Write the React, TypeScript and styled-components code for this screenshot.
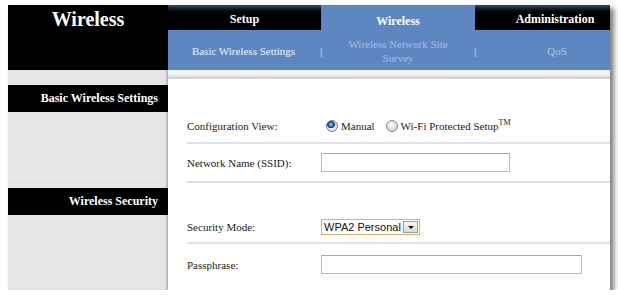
import React from "react";
import styled, { createGlobalStyle } from "styled-components";

const Global = createGlobalStyle`
  html, body { margin: 0; padding: 0; background: #fff; }
  body { font-family: "Liberation Serif", "Times New Roman", serif; }
`;

const Page = styled.div`
  padding: 5px 0 0 8px;
`;

const Frame = styled.div`
  width: 602px;
  display: grid;
  grid-template-columns: 160px 442px;
  box-shadow: 4px 3px 5px rgba(0, 0, 0, 0.5);
`;

const Brand = styled.div`
  background: #000;
  height: 65px;
  box-sizing: border-box;
  padding-top: 3px;
  text-align: center;
  color: #fff;
  font-size: 20px;
  font-weight: bold;
  line-height: 22px;
`;

const Nav = styled.div`
  display: flex;
  flex-direction: column;
`;

const TabRow = styled.div`
  display: grid;
  grid-template-columns: 153px 154px 1fr;
  height: 25px;
  background: linear-gradient(#3b4b63 0, #0b0f18 5px, #000 8px);
`;

const Tab = styled.div<{ $active?: boolean; $shift?: number }>`
  background: ${(p) => (p.$active ? "#5e87c2" : "transparent")};
  color: #fff;
  font-weight: bold;
  font-size: 12px;
  line-height: 14px;
  text-align: center;
  box-sizing: border-box;
  padding-top: ${(p) => (p.$active ? 9 : 7)}px;
  padding-left: ${(p) => p.$shift ?? 0}px;
`;

const SubNav = styled.div`
  height: 40px;
  box-sizing: border-box;
  padding-top: 2px;
  background: #5e87c2;
  display: flex;
  align-items: center;
  font-size: 11px;
  line-height: 14px;
`;

const SubItem = styled.div<{ $w?: number; $muted?: boolean; $shift?: number }>`
  ${(p) => (p.$w ? `width: ${p.$w}px;` : "flex: 1;")}
  text-align: center;
  box-sizing: border-box;
  padding: 0 ${(p) => (p.$muted ? 24 : 0)}px 0 ${(p) => p.$shift ?? (p.$muted ? 24 : 0)}px;
  color: ${(p) => (p.$muted ? "#a9badf" : "#eef2fa")};
`;

const SubLink = styled.span<{ $pale?: boolean }>`
  color: ${(p) => (p.$pale ? "#b3c2e6" : "inherit")};
`;

const Sep = styled.div`
  width: 4px;
  text-align: center;
  color: #dbe3f3;
`;

const SideStrip = styled.div`
  height: 10px;
  background: #e6e6e6;
  box-shadow: inset -3px 0 3px -2px rgba(0, 0, 0, 0.35);
`;

const MainStrip = styled.div`
  height: 10px;
  background: linear-gradient(
    #f4f4f4 0,
    #ececec 6px,
    #d3d3d3 7px,
    #d3d3d3 9px,
    #ffffff 9px
  );
`;

const Side = styled.div`
  background: #e6e6e6;
  padding-top: 5px;
  box-shadow: inset -3px 0 3px -2px rgba(0, 0, 0, 0.35);
`;

const SectionTitle = styled.div`
  background: #000;
  height: 27px;
  line-height: 27px;
  color: #fff;
  font-size: 12px;
  font-weight: bold;
  text-align: right;
  padding-right: 10px;
`;

const Main = styled.div<{ $top: number }>`
  background: #fff;
  padding: ${(p) => p.$top}px 0 0 19px;
`;

const Row = styled.div<{ $h: number; $last?: boolean; $bottom?: number }>`
  display: flex;
  align-items: center;
  height: ${(p) => p.$h}px;
  box-sizing: border-box;
  padding-bottom: ${(p) => p.$bottom ?? 0}px;
  border-bottom: ${(p) => (p.$last ? "none" : "2px solid #dedef0")};
`;

const Label = styled.div`
  width: 134px;
  font-size: 11px;
  color: #222;
`;

const Value = styled.div`
  display: flex;
  align-items: center;
  font-size: 11px;
  color: #222;
`;

const Radio = styled.input.attrs({ type: "radio" })`
  appearance: none;
  -webkit-appearance: none;
  width: 12px;
  height: 12px;
  margin: 0 3px 0 5px;
  border-radius: 50%;
  border: 1px solid #8f8f8f;
  box-sizing: border-box;
  background: radial-gradient(circle at 45% 40%, #ffffff 0, #e9e9e9 3px, #cfcfcf 6px);
  &:checked {
    border-color: #6f7f95;
    background: radial-gradient(circle at 40% 35%, #b9e2ff 0, #3f86d6 1.5px, #174a94 3px, #0e2f66 3.6px, transparent 4px),
      radial-gradient(circle, #f4f4f4 0, #dcdcdc 6px);
  }
`;

const RadioText = styled.span<{ $gap?: number }>`
  margin-right: ${(p) => p.$gap ?? 0}px;
`;

const Tm = styled.sup`
  font-size: 8px;
  vertical-align: 5px;
  line-height: 0;
`;

const TextBox = styled.input<{ $w: number }>`
  width: ${(p) => p.$w}px;
  height: 19px;
  box-sizing: border-box;
  margin: 0;
  border: 1px solid #bcbcbc;
  border-top-color: #a9a9a9;
  background: #fff;
  outline: none;
`;

const Select = styled.div`
  width: 99px;
  height: 16px;
  box-sizing: border-box;
  border: 1px solid #d7b36a;
  background: #fff;
  display: flex;
  align-items: center;
  justify-content: space-between;
  padding: 0 1px 0 2px;
  font-family: "Liberation Sans", Arial, sans-serif;
  font-size: 11px;
  color: #111;
`;

const SelectButton = styled.div`
  width: 15px;
  height: 12px;
  box-sizing: border-box;
  border: 1px solid #9b9b9b;
  background: linear-gradient(#f6f6f6, #d9d9d9);
  display: flex;
  align-items: center;
  justify-content: center;
`;

const Arrow = styled.div`
  width: 0;
  height: 0;
  border-left: 3px solid transparent;
  border-right: 3px solid transparent;
  border-top: 3px solid #111;
  margin-top: 1px;
`;

export default function App() {
  return (
    <>
      <Global />
      <Page>
        <Frame>
          <Brand>Wireless</Brand>
          <Nav>
            <TabRow>
              <Tab>Setup</Tab>
              <Tab $active>Wireless</Tab>
              <Tab $shift={25}>Administration</Tab>
            </TabRow>
            <SubNav>
              <SubItem $w={151}>Basic Wireless Settings</SubItem>
              <Sep>|</Sep>
              <SubItem $w={150} $muted>
                Wireless Network Site Survey
              </SubItem>
              <Sep>|</Sep>
              <SubItem $shift={27}>
                <SubLink $pale>QoS</SubLink>
              </SubItem>
            </SubNav>
          </Nav>

          <SideStrip />
          <MainStrip />

          <Side>
            <SectionTitle>Basic Wireless Settings</SectionTitle>
          </Side>
          <Main $top={30}>
            <Row $h={34}>
              <Label>Configuration View:</Label>
              <Value>
                <Radio name="cfg" defaultChecked />
                <RadioText $gap={6}>Manual</RadioText>
                <Radio name="cfg" />
                <RadioText>
                  Wi-Fi Protected Setup<Tm>TM</Tm>
                </RadioText>
              </Value>
            </Row>
            <Row $h={39}>
              <Label>Network Name (SSID):</Label>
              <Value>
                <TextBox $w={189} defaultValue="" />
              </Value>
            </Row>
          </Main>

          <Side>
            <SectionTitle>Wireless Security</SectionTitle>
          </Side>
          <Main $top={28}>
            <Row $h={33}>
              <Label>Security Mode:</Label>
              <Value>
                <Select>
                  <span>WPA2 Personal</span>
                  <SelectButton>
                    <Arrow />
                  </SelectButton>
                </Select>
              </Value>
            </Row>
            <Row $h={46} $bottom={5} $last>
              <Label>Passphrase:</Label>
              <Value>
                <TextBox $w={261} defaultValue="" />
              </Value>
            </Row>
          </Main>
        </Frame>
      </Page>
    </>
  );
}
